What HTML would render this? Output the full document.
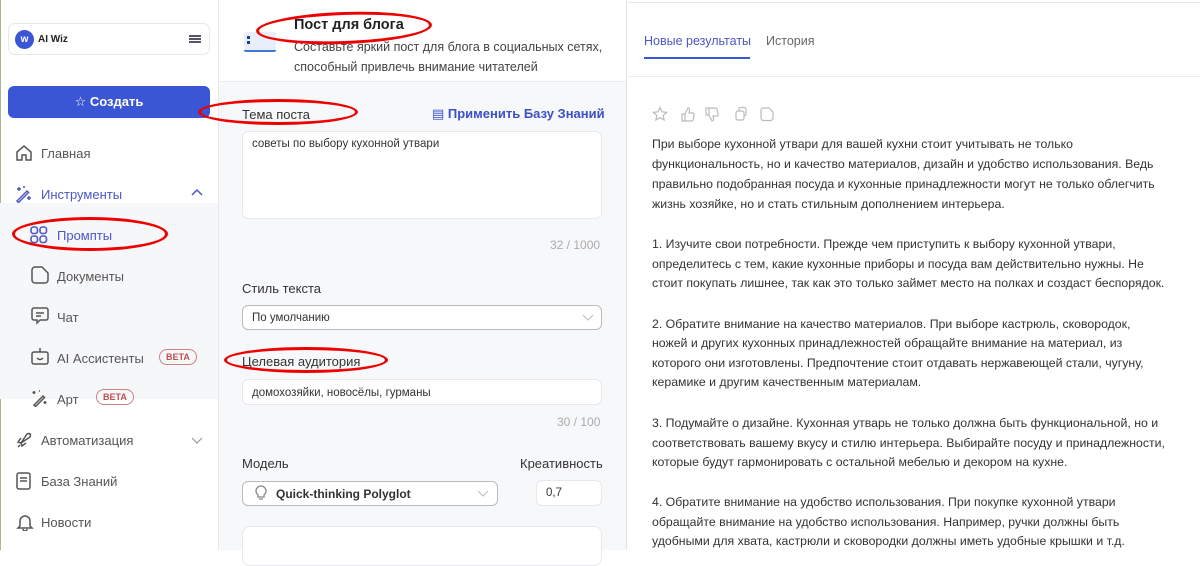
<!DOCTYPE html>
<html><head><meta charset="utf-8">
<style>
*{box-sizing:border-box;margin:0;padding:0}
body{width:1200px;height:550px;overflow:hidden;background:#fff;font-family:"Liberation Sans","DejaVu Sans",sans-serif;color:#333;position:relative}
.a{position:absolute;white-space:nowrap}
.nav{font-size:13px;color:#555}
.r{font-size:12.3px;color:#333}
.box{position:absolute;background:#fff;border:1px solid #e6e8ec;border-radius:6px}
.ell{position:absolute;border:3px solid #e00;border-radius:50%}
.badge{position:absolute;font-size:9px;font-weight:bold;color:#c05050;border:1px solid #d08080;border-radius:9px;padding:2px 6px}
svg{position:absolute}
</style></head><body>
<div class="a" style="left:0;top:0;width:1px;height:550px;background:#a8b890"></div>
<!-- sidebar -->
<div class="box" style="left:8px;top:23px;width:202px;height:32px;border-radius:7px"></div>
<div class="a" style="left:15px;top:30px;width:19px;height:19px;border-radius:50%;background:#3a56d4;color:#fff;font-size:10px;font-weight:bold;text-align:center;line-height:19px">w</div>
<div class="a" style="left:38px;top:34px;font-size:10px;font-weight:bold;color:#222">AI Wiz</div>
<div class="a" style="left:189px;top:35px;width:12px;height:2px;background:#556;box-shadow:0 3px 0 #556,0 6px 0 #556"></div>
<div class="a" style="left:8px;top:86px;width:202px;height:32px;background:#3a56d4;border-radius:6px;color:#fff;font-size:13px;font-weight:bold;text-align:center;line-height:32px">☆ Создать</div>
<div class="a" style="left:0;top:203px;width:218px;height:196px;background:#f6f7f9"></div>
<svg style="left:15px;top:144px" width="18" height="18" viewBox="0 0 18 18" fill="none" stroke="#555" stroke-width="1.5"><path d="M2 8 9 2l7 6v8h-5v-5H7v5H2z"/></svg>
<div class="a nav" style="left:41px;top:146px">Главная</div>
<svg style="left:15px;top:185px" width="18" height="18" fill="none" stroke="#4c56c8" stroke-width="1.5"><path d="M2 16 12 6l1.5 1.5-10 10zM4 2v4M2 4h4M14 11v4M12 13h4M9 1v2"/></svg>
<div class="a nav" style="left:41px;top:187px;color:#4c56c8">Инструменты</div>
<svg style="left:191px;top:188px" width="12" height="10"><path d="M1 7l5-5 5 5" fill="none" stroke="#4c56c8" stroke-width="1.5"/></svg>
<svg style="left:30px;top:226px" width="18" height="18" fill="none" stroke="#4c56c8" stroke-width="1.6"><rect x="1" y="1" width="6.5" height="6.5" rx="2.5"/><rect x="10" y="1" width="6.5" height="6.5" rx="2.5"/><rect x="1" y="10" width="6.5" height="6.5" rx="2.5"/><rect x="10" y="10" width="6.5" height="6.5" rx="2.5"/></svg>
<div class="a nav" style="left:57px;top:228px;color:#4c56c8">Промпты</div>
<svg style="left:31px;top:266px" width="18" height="18" fill="none" stroke="#555" stroke-width="1.5"><path d="M4 1h7l6 6v7a3 3 0 0 1-3 3H4a3 3 0 0 1-3-3V4a3 3 0 0 1 3-3z"/></svg>
<div class="a nav" style="left:57px;top:269px">Документы</div>
<svg style="left:31px;top:307px" width="18" height="18" fill="none" stroke="#555" stroke-width="1.5"><path d="M3 1h12a2 2 0 0 1 2 2v8a2 2 0 0 1-2 2H9l-3 3v-3H3a2 2 0 0 1-2-2V3a2 2 0 0 1 2-2zM5 6h8M5 9h5"/></svg>
<div class="a nav" style="left:57px;top:310px">Чат</div>
<svg style="left:31px;top:347px" width="18" height="18" fill="none" stroke="#555" stroke-width="1.5"><rect x="1" y="5" width="16" height="12" rx="2"/><path d="M9 1v4M6 11q3 3 6 0"/></svg>
<div class="a nav" style="left:57px;top:351px">AI Ассистенты</div>
<div class="badge" style="left:159px;top:349px">BETA</div>
<svg style="left:31px;top:389px" width="18" height="18" fill="none" stroke="#555" stroke-width="1.5"><path d="M3 16 12 7l1.5 1.5-9 9zM3 2v3M1.5 3.5h3M14 12v3M12.5 13.5h3M8 2h1"/></svg>
<div class="a nav" style="left:57px;top:392px">Арт</div>
<div class="badge" style="left:96px;top:389px">BETA</div>
<svg style="left:15px;top:431px" width="18" height="18" fill="none" stroke="#555" stroke-width="1.5"><path d="M6 12 12 3q3-1 3 0 1 0 0 3L6 12zM6 12l-3-1 3-4M6 12l1 3 4-3M3 16l2-2"/></svg>
<div class="a nav" style="left:41px;top:433px">Автоматизация</div>
<svg style="left:191px;top:435px" width="12" height="10"><path d="M1 3l5 5 5-5" fill="none" stroke="#999" stroke-width="1.2"/></svg>
<svg style="left:16px;top:472px" width="18" height="18" fill="none" stroke="#555" stroke-width="1.5"><rect x="1" y="1" width="13" height="16" rx="2"/><path d="M4 6h7M4 9h7"/></svg>
<div class="a nav" style="left:41px;top:474px">База Знаний</div>
<svg style="left:16px;top:513px" width="18" height="18" fill="none" stroke="#555" stroke-width="1.5"><path d="M4 13V8a5 5 0 0 1 10 0v5l2 2H2zM7 16a2 2 0 0 0 4 0"/></svg>
<div class="a nav" style="left:41px;top:515px">Новости</div>
<!-- middle -->
<div class="a" style="left:218px;top:0;width:409px;height:550px;background:#f7f8fa;border-left:1px solid #e8e8e8;border-right:1px solid #e4e4e4"></div>
<div class="a" style="left:219px;top:0;width:407px;height:82px;background:#fff;border-bottom:1px solid #ececec"></div>
<div class="a" style="left:244px;top:32px;width:32px;height:20px;background:#e8eefa;border-bottom:2px solid #3a7ad4;border-radius:2px"></div>
<div class="a" style="left:247px;top:36px;width:3px;height:3px;background:#1f3d8c;box-shadow:0 5px 0 #1f3d8c"></div>
<div class="a" style="left:294px;top:17px;font-size:14.5px;font-weight:bold;color:#222">Пост для блога</div>
<div class="a" style="left:294px;top:40px;font-size:12.5px;color:#444">Составьте яркий пост для блога в социальных сетях,</div>
<div class="a" style="left:294px;top:60px;font-size:12.5px;color:#444">способный привлечь внимание читателей</div>
<div class="a" style="left:242px;top:107px;font-size:13px;color:#333">Тема поста</div>
<div class="a" style="left:432px;top:106px;font-size:13px;font-weight:bold;color:#3a4fc8">▤ Применить Базу Знаний</div>
<div class="box" style="left:242px;top:131px;width:360px;height:88px"></div>
<div class="a" style="left:252px;top:138px;font-size:11.5px;color:#333">советы по выбору кухонной утвари</div>
<div class="a" style="left:550px;top:238px;font-size:12px;color:#aaa">32 / 1000</div>
<div class="a" style="left:242px;top:281px;font-size:13px">Стиль текста</div>
<div class="box" style="left:242px;top:305px;width:360px;height:25px;border-color:#bbb"></div>
<div class="a" style="left:252px;top:312px;font-size:11.5px">По умолчанию</div>
<svg style="left:582px;top:312px" width="12" height="10"><path d="M1 3l5 5 5-5" fill="none" stroke="#bbb" stroke-width="1"/></svg>
<div class="a" style="left:242px;top:354px;font-size:13px">Целевая аудитория</div>
<div class="box" style="left:242px;top:379px;width:360px;height:26px"></div>
<div class="a" style="left:252px;top:387px;font-size:11.5px">домохозяйки, новосёлы, гурманы</div>
<div class="a" style="left:557px;top:415px;font-size:12px;color:#aaa">30 / 100</div>
<div class="a" style="left:242px;top:456px;font-size:13px">Модель</div>
<div class="a" style="left:520px;top:456px;font-size:13px">Креативность</div>
<div class="box" style="left:242px;top:481px;width:256px;height:25px;border-color:#bbb"></div>
<svg style="left:254px;top:485px" width="14" height="16" fill="none" stroke="#888" stroke-width="1.3"><path d="M4 10a5 5 0 1 1 6 0v2H4zM5 14h4"/></svg>
<div class="a" style="left:276px;top:487px;font-size:12px;font-weight:bold;color:#333">Quick-thinking Polyglot</div>
<svg style="left:477px;top:488px" width="12" height="10"><path d="M1 3l5 5 5-5" fill="none" stroke="#bbb" stroke-width="1"/></svg>
<div class="box" style="left:536px;top:480px;width:66px;height:26px"></div>
<div class="a" style="left:546px;top:487px;font-size:11.5px">0,7</div>
<div class="box" style="left:242px;top:526px;width:360px;height:40px;border-radius:8px"></div>
<!-- right -->
<div class="a" style="left:628px;top:2px;width:572px;height:1px;background:#e6e6e6"></div>
<div class="a" style="left:644px;top:34px;font-size:12.5px;color:#4c56c8">Новые результаты</div>
<div class="a" style="left:766px;top:34px;font-size:12.5px;color:#666">История</div>
<div class="a" style="left:644px;top:57px;width:106px;height:2px;background:#3a56d4"></div>
<div class="a" style="left:628px;top:76px;width:572px;height:1px;background:#ececec"></div>
<svg style="left:652px;top:106px" width="140" height="18" fill="none" stroke="#bbb" stroke-width="1.2">
<path d="M8 1.5l2 4.3 4.6.5-3.4 3.1 1 4.6L8 11.7 3.8 14l1-4.6L1.4 6.3 6 5.8z"/>
<path d="M30 8h3v7h-3zM33 8l3-6q2 0 1.5 3L37 7h4q1.5 0 1 2l-1 5q-.5 1-2 1h-6"/>
<path d="M54 9h3V2h-3zM57 9l3 6q2 0 1.5-3L61 10h4q1.5 0 1-2l-1-5q-.5-1-2-1h-6"/>
<rect x="84" y="5" width="8" height="9" rx="2"/><path d="M87 5V3a1.5 1.5 0 0 1 1.5-1.5h4A1.5 1.5 0 0 1 94 3v5a1.5 1.5 0 0 1-1.5 1.5H92"/>
<path d="M111 2h6l4 4v6a2.5 2.5 0 0 1-2.5 2.5h-7A2.5 2.5 0 0 1 109 12V4.5A2.5 2.5 0 0 1 111 2z"/>
</svg>
<div class="a r" style="left:652px;top:137px">При выборе кухонной утвари для вашей кухни стоит учитывать не только</div>
<div class="a r" style="left:652px;top:157px">функциональность, но и качество материалов, дизайн и удобство использования. Ведь</div>
<div class="a r" style="left:652px;top:177px">правильно подобранная посуда и кухонные принадлежности могут не только облегчить</div>
<div class="a r" style="left:652px;top:197px">жизнь хозяйке, но и стать стильным дополнением интерьера.</div>
<div class="a r" style="left:652px;top:237px">1. Изучите свои потребности. Прежде чем приступить к выбору кухонной утвари,</div>
<div class="a r" style="left:652px;top:257px">определитесь с тем, какие кухонные приборы и посуда вам действительно нужны. Не</div>
<div class="a r" style="left:652px;top:276px">стоит покупать лишнее, так как это только займет место на полках и создаст беспорядок.</div>
<div class="a r" style="left:652px;top:317px">2. Обратите внимание на качество материалов. При выборе кастрюль, сковородок,</div>
<div class="a r" style="left:652px;top:336px">ножей и других кухонных принадлежностей обращайте внимание на материал, из</div>
<div class="a r" style="left:652px;top:356px">которого они изготовлены. Предпочтение стоит отдавать нержавеющей стали, чугуну,</div>
<div class="a r" style="left:652px;top:375px">керамике и другим качественным материалам.</div>
<div class="a r" style="left:652px;top:416px">3. Подумайте о дизайне. Кухонная утварь не только должна быть функциональной, но и</div>
<div class="a r" style="left:652px;top:436px">соответствовать вашему вкусу и стилю интерьера. Выбирайте посуду и принадлежности,</div>
<div class="a r" style="left:652px;top:455px">которые будут гармонировать с остальной мебелью и декором на кухне.</div>
<div class="a r" style="left:652px;top:495px">4. Обратите внимание на удобство использования. При покупке кухонной утвари</div>
<div class="a r" style="left:652px;top:515px">обращайте внимание на удобство использования. Например, ручки должны быть</div>
<div class="a r" style="left:652px;top:534px">удобными для хвата, кастрюли и сковородки должны иметь удобные крышки и т.д.</div>
<!-- annotations -->
<div class="ell" style="left:256px;top:12px;width:176px;height:32px;transform:rotate(-2deg)"></div>
<div class="ell" style="left:198px;top:99px;width:160px;height:26px"></div>
<div class="ell" style="left:12px;top:217px;width:156px;height:34px"></div>
<div class="ell" style="left:224px;top:347px;width:164px;height:26px"></div>
</body></html>
